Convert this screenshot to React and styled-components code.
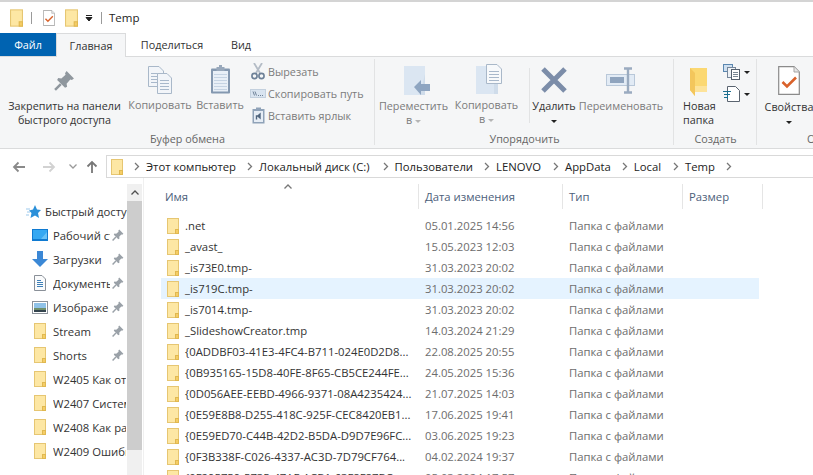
import React from "react";
import styled, { createGlobalStyle } from "styled-components";

const GlobalStyle = createGlobalStyle`
  html, body { margin: 0; padding: 0; background: #fff; }
  body { font-family: "Open Sans", "Noto Sans", sans-serif; font-size: 11.3px; color: #333; }
`;

const Page = styled.div`
  width: 813px;
  height: 475px;
  overflow: hidden;
  display: flex;
  flex-direction: column;
  background: #fff;
`;

const TopEdge = styled.div`
  height: 2px;
  background: #d4d4d4;
`;

const TitleBar = styled.div`
  height: 31px;
  display: flex;
  align-items: center;
  padding-left: 10px;
  font-size: 11.5px;
  color: #222;
`;

const TitleSep = styled.span`
  width: 1px;
  height: 12px;
  background: #9a9a9a;
  margin: ${(p) => p.$margin};
`;

const TitleGap = styled.span`
  width: 10px;
`;

const QuickCaret = styled.svg`
  margin-left: 7px;
`;

const Tabs = styled.div`
  height: 24px;
  box-sizing: border-box;
  display: flex;
  border-bottom: 1px solid #dadbdc;
  font-size: 10.8px;
`;

const Tab = styled.div`
  width: ${(p) => p.$w}px;
  height: ${(p) => (p.$active ? 24 : 23)}px;
  display: flex;
  align-items: center;
  justify-content: center;
  box-sizing: border-box;
  color: ${(p) => (p.$file ? "#fff" : "#333")};
  background: ${(p) => (p.$file ? "#0063b1" : p.$active ? "#f5f6f7" : "transparent")};
  border: ${(p) => (p.$active ? "1px solid #dadbdc" : "none")};
  border-bottom: none;
`;

const Ribbon = styled.div`
  height: 92px;
  box-sizing: border-box;
  background: #f5f6f7;
  border-bottom: 1px solid #dadbdc;
  display: flex;
  font-size: 10.8px;
`;

const Group = styled.div`
  width: ${(p) => p.$w}px;
  flex: none;
  display: flex;
  flex-direction: column;
  position: relative;
  box-sizing: border-box;
  padding-top: 2px;
  &::after {
    content: "";
    position: absolute;
    right: 0;
    top: 2px;
    bottom: 3px;
    width: 1px;
    background: #e2e3e4;
  }
`;

const GroupBody = styled.div`
  height: 73px;
  display: flex;
  padding-left: ${(p) => p.$pad || 0}px;
`;

const GroupLabel = styled.div`
  height: 14px;
  line-height: 14px;
  color: #666;
  white-space: nowrap;
  text-align: ${(p) => (p.$clipped ? "left" : "center")};
  padding-left: ${(p) => (p.$clipped ? 50 : 0)}px;
`;

const BigButton = styled.div`
  width: ${(p) => p.$w}px;
  margin-right: ${(p) => p.$gap || 0}px;
  flex: none;
  display: flex;
  flex-direction: column;
  align-items: center;
  text-align: center;
  line-height: 14px;
  white-space: nowrap;
  color: ${(p) => (p.$off ? "#7b7b7b" : "#333")};
  svg:first-child { margin-top: ${(p) => p.$iconTop ?? 6}px; }
`;

const BigLabel = styled.div`
  position: relative;
  margin-top: ${(p) => p.$top}px;
`;

const Caret = styled.span`
  display: inline-block;
  width: 0;
  height: 0;
  margin-left: ${(p) => p.$left ?? 3}px;
  vertical-align: middle;
  border-left: 3px solid transparent;
  border-right: 3px solid transparent;
  border-top: 3px solid ${(p) => (p.$off ? "#b5b5b5" : "#222")};
`;

const SmallList = styled.div`
  display: flex;
  flex-direction: column;
  margin-left: 1px;
  padding-top: 1px;
`;

const SmallRow = styled.div`
  height: 22px;
  display: flex;
  align-items: center;
  white-space: nowrap;
  color: #7b7b7b;
`;

const SmallIcon = styled.span`
  width: 20px;
  display: flex;
  justify-content: center;
`;

const VLine = styled.span`
  width: 1px;
  height: 55px;
  margin: 9px 2px 0 5px;
  background: #e2e3e4;
  flex: none;
`;

const NewFolderCol = styled.div`
  width: 41px;
  margin-left: 9px;
  line-height: 14px;
  color: #333;
  svg { display: block; margin: 9px 0 0 6px; }
`;

const NewFolderText = styled.div`
  margin-top: 3px;
`;

const IconStack = styled.div`
  display: flex;
  flex-direction: column;
  gap: 6px;
  padding-top: 5px;
  margin-left: -1px;
`;

const IconWithCaret = styled.div`
  display: flex;
  align-items: center;
  height: 16px;
`;

const AddressRow = styled.div`
  height: 29px;
  display: flex;
  align-items: center;
  flex: none;
  padding-top: 6px;
  box-sizing: border-box;
`;

const NavArea = styled.div`
  width: 106px;
  padding-left: 12px;
  box-sizing: border-box;
  display: flex;
  align-items: center;
`;

const NavGap = styled.span`
  width: ${(p) => p.$w}px;
`;

const AddressBox = styled.div`
  flex: 1;
  height: 23px;
  box-sizing: border-box;
  border: 1px solid #d9d9d9;
  border-right: none;
  display: flex;
  align-items: center;
  padding-left: 4px;
  color: #222;
  white-space: nowrap;
`;

const Crumb = styled.span`
  display: inline-flex;
  align-items: center;
  margin-left: ${(p) => p.$ml}px;
`;

const CrumbText = styled.span`
  margin-left: 6px;
`;

const Main = styled.div`
  flex: 1;
  display: flex;
  min-height: 0;
`;

const Sidebar = styled.div`
  width: 127px;
  flex: none;
  overflow: hidden;
  padding-top: 21px;
  box-sizing: border-box;
`;

const SideRow = styled.div`
  height: 24px;
  display: flex;
  align-items: center;
  padding-left: ${(p) => (p.$head ? 26 : 32)}px;
  position: relative;
  white-space: nowrap;
  color: #333;
`;

const SideIcon = styled.span`
  width: ${(p) => (p.$head ? 15 : 16)}px;
  margin-right: ${(p) => (p.$head ? 4 : 5)}px;
  flex: none;
  display: flex;
  justify-content: center;
`;

const SideText = styled.span`
  display: block;
  overflow: hidden;
  max-width: ${(p) => p.$max}px;
`;

const PinSlot = styled.span`
  position: absolute;
  left: 112px;
  top: 6px;
  display: flex;
`;

const Scrollbar = styled.div`
  width: 15px;
  flex: none;
  background: #f0f0f0;
  margin-top: 6px;
  display: flex;
  flex-direction: column;
`;

const ScrollButton = styled.div`
  height: 17px;
  display: flex;
  align-items: center;
  justify-content: center;
`;

const ScrollThumb = styled.div`
  height: 249px;
  background: #cdcdcd;
`;

const ListPane = styled.div`
  flex: 1;
  border-left: 1px solid #f0f0f0;
  margin-left: 1px;
  overflow: hidden;
  padding-left: 17px;
  position: relative;
`;

const SortMark = styled.span`
  position: absolute;
  left: 141px;
  top: 4px;
  display: flex;
`;

const HeaderRow = styled.div`
  display: grid;
  grid-template-columns: 258px 144px 120px 80px;
  height: 25px;
  margin-top: 6px;
  margin-bottom: 6px;
  color: #4c607a;
`;

const HeaderCell = styled.div`
  display: flex;
  align-items: center;
  box-sizing: border-box;
  padding-left: ${(p) => p.$pad}px;
  border-right: 1px solid #e5e5e5;
  height: 25px;
`;

const FileRow = styled.div`
  display: grid;
  grid-template-columns: 257px 144px 1fr;
  width: 598px;
  height: 21px;
  align-items: center;
  background: ${(p) => (p.$hover ? "#e5f3ff" : "transparent")};
  color: #6d6d6d;
  white-space: nowrap;
`;

const NameCell = styled.div`
  display: flex;
  align-items: center;
  padding-left: 6px;
  color: #333;
  overflow: hidden;
`;

const NameIcon = styled.span`
  width: 18px;
  flex: none;
  display: flex;
`;

const DateCell = styled.div`
  padding-left: 7px;
`;

const TypeCell = styled.div`
  padding-left: 7px;
`;

const MoveSvg = styled.svg`
  margin-left: 7px;
`;

const CopyToSvg = styled.svg`
  margin-left: 4px;
`;

const Folder = ({ w = 12, h = 16 }) => (
  <svg width={w} height={h} viewBox="0 0 12 16">
    <rect x="0.5" y="0.5" width="11" height="15" fill="#fde7a4" stroke="#e6c672" />
    <rect x="8.5" y="11.5" width="3" height="4" fill="#f5cd66" stroke="#e0b850" strokeWidth="1" />
  </svg>
);

const Pin = ({ size = 12, color = "#9aa1a8" }) => (
  <svg width={size} height={size} viewBox="0 0 20 20">
    <path d="M12 1 L19 8 L17 9.5 L15.5 9 L12 13 L12.5 16 L10.5 17 L3 9.5 L4 7.5 L7 8 L11 4.5 L10.5 3 Z" fill={color} />
    <path d="M6.5 13.5 L1 19" stroke={color} strokeWidth="2.4" />
  </svg>
);

const Doc = ({ x, y, w, h, lines = true, fill = "#f2f5f9", stroke = "#a9b8c9" }) => (
  <g>
    <path
      d={`M${x + 0.5} ${y + 0.5} H${x + w - 5} L${x + w - 0.5} ${y + 5} V${y + h - 0.5} H${x + 0.5} Z`}
      fill={fill}
      stroke={stroke}
    />
    {lines &&
      [...Array(Math.floor((h - 8) / 3))].map((_, i) => (
        <path key={i} d={`M${x + 3} ${y + 7.5 + i * 3} H${x + w - 3}`} stroke="#a8b8cb" />
      ))}
  </g>
);

const CopyIcon = () => (
  <svg width="26" height="28" viewBox="0 0 26 28">
    <Doc x={1} y={0} w={16} h={21} />
    <Doc x={10} y={7} w={15} h={21} />
  </svg>
);

const PasteIcon = () => (
  <svg width="21" height="29" viewBox="0 0 21 29">
    <rect x="1" y="3.5" width="19" height="25" rx="1" fill="#8498b0" />
    <rect x="3" y="6" width="15" height="20.5" fill="#e8eff7" />
    {[9, 12, 15, 18, 21, 24].map((y) => (
      <path key={y} d={`M4 ${y + 0.5} H17`} stroke="#c5d3e3" />
    ))}
    <rect x="6.5" y="2" width="8" height="4" fill="#98a8bb" />
    <rect x="9" y="0" width="3" height="3" fill="#98a8bb" />
  </svg>
);

const ScissorsIcon = () => (
  <svg width="14" height="17" viewBox="0 0 14 17" fill="none">
    <path d="M3 0 L9 10 M11 0 L5 10" stroke="#b4bcc6" strokeWidth="1.8" />
    <circle cx="3.5" cy="13" r="2.6" stroke="#6d8097" strokeWidth="1.6" />
    <circle cx="10.5" cy="13" r="2.6" stroke="#6d8097" strokeWidth="1.6" />
  </svg>
);

const CopyPathIcon = () => (
  <svg width="16" height="9" viewBox="0 0 16 9" fill="none">
    <rect x="0.5" y="0.5" width="15" height="8" fill="#d9e4f0" stroke="#c3d0de" />
    <path d="M3 2.5 L4.5 6.5 M5 2.5 L6.5 6.5" stroke="#6f8298" />
    <path d="M8 6.5 H9 M10 6.5 H11 M12 6.5 H13" stroke="#6f8298" />
  </svg>
);

const ShortcutIcon = () => (
  <svg width="13" height="17" viewBox="0 0 13 17" fill="none">
    <rect x="0.5" y="2" width="12" height="14.5" fill="#8fa2b8" />
    <rect x="2" y="4" width="9" height="11" fill="#e6edf5" />
    <rect x="4" y="0.5" width="5" height="3" fill="#8fa2b8" />
    <path d="M4.5 12.5 V9 H8 M8 7 V11 L5.8 9 Z" stroke="#50657e" strokeWidth="1.4" />
  </svg>
);

const MoveIcon = () => (
  <MoveSvg width="26" height="29" viewBox="0 0 26 29">
    <rect x="0" y="0" width="21" height="29" fill="#dbe6f2" />
    <path d="M21 8 V29 H16 Z" fill="#cfdcea" />
    <path d="M10 21 L17 14 V18 H26 V25 H17 V29 Z" fill="#8ea5c1" />
  </MoveSvg>
);

const CopyToIcon = () => (
  <CopyToSvg width="26" height="30" viewBox="0 0 26 30">
    <rect x="0" y="2" width="22" height="28" fill="#dbe6f2" />
    <rect x="18" y="8" width="4" height="22" fill="#cfdcea" />
    <Doc x={10} y={0} w={16} h={20} fill="#f7f9fb" />
  </CopyToSvg>
);

const DeleteIcon = () => (
  <svg width="26" height="26" viewBox="0 0 26 26">
    <path d="M2 2 L24 24 M24 2 L2 24" stroke="#7c8da9" strokeWidth="5" />
  </svg>
);

const RenameIcon = () => (
  <svg width="30" height="27" viewBox="0 0 30 27" fill="none">
    <rect x="0.5" y="7.5" width="28" height="11" fill="#e2ebf5" stroke="#b9c8d9" />
    <rect x="4" y="10" width="14" height="6" fill="#8fa4be" />
    <path d="M18 1.5 H26 M22 1.5 V25.5 M18 25.5 H26" stroke="#9aabc0" strokeWidth="2.4" />
  </svg>
);

const BigFolderIcon = () => (
  <svg width="18" height="28" viewBox="0 0 18 28">
    <path d="M1 0 H18 V24 H6 V28 L1 22 Z" fill="#fbd872" />
    <path d="M1 0 L6 5 V28 L1 22 Z" fill="#f3c65c" />
    <path d="M6 18 H18 V24 H6 Z" fill="#fde39a" />
  </svg>
);

const NewItemIcon = () => (
  <svg width="18" height="16" viewBox="0 0 18 16" fill="none">
    <rect x="0.5" y="0.5" width="9" height="7" fill="#cfe0f0" stroke="#5b87b0" />
    <rect x="4.5" y="3.5" width="8" height="10" fill="#eef2f6" stroke="#77879a" />
    <rect x="8.5" y="5.5" width="8" height="10" fill="#fff" stroke="#55606e" />
    <path d="M10 8.5 H15 M10 10.5 H15 M10 12.5 H15" stroke="#7a8794" />
  </svg>
);

const EasyAccessIcon = () => (
  <svg width="18" height="16" viewBox="0 0 18 16" fill="none">
    <path d="M4.5 0.5 H12.5 L16.5 4.5 V15.5 H4.5 Z" fill="#fff" stroke="#5a6470" />
    <path d="M0 5.5 H8 M1 8.5 H7 M1 11.5 H5" stroke="#1d6f8f" />
    <path d="M4.5 5 V13" stroke="#1d6f8f" />
  </svg>
);

const PropsIcon = ({ w = 22, h = 29 }) => (
  <svg width={w} height={h} viewBox="0 0 22 29" fill="none">
    <path d="M0.7 0.7 H16 L21.3 6 V28.3 H0.7 Z" fill="#fff" stroke="#8b8b8b" strokeWidth="1.2" />
    <path d="M16 0.7 V6 H21.3" fill="#e6e6e6" stroke="#a5a5a5" />
    <path d="M4.5 16 L9 20.5 L18 11.5" stroke="#d9622b" strokeWidth="2.6" />
  </svg>
);

const ArrowSvg = styled.svg`
  transform: rotate(${(p) => p.$dir}deg);
`;

const Arrow = ({ dir, color }) => (
  <ArrowSvg $dir={dir} width="14" height="14" viewBox="0 0 14 14" fill="none">
    <path d="M13 7 H2 M6.5 2.5 L2 7 L6.5 11.5" stroke={color} strokeWidth="1.8" />
  </ArrowSvg>
);

const Chevron = ({ color = "#777", rot = 0, size = 6 }) => (
  <ArrowSvg $dir={rot} width={size} height={size + 3} viewBox="0 0 6 9" fill="none">
    <path d="M1 1 L4.5 4.5 L1 8" stroke={color} strokeWidth="1.3" />
  </ArrowSvg>
);

const StarIcon = () => (
  <svg width="15" height="15" viewBox="0 0 15 15">
    <path d="M9 1 L11 5.5 L15 6 L12 9 L13 14 L9 11.5 L4.5 14 L5.5 9 L3 6.5 L7 5.5 Z" fill="#2b90d9" />
    <path d="M0 5 H4 M1 8 H4 M0 11 H3" stroke="#9cc9ec" />
  </svg>
);

const DesktopIcon = () => (
  <svg width="16" height="12" viewBox="0 0 16 12">
    <rect x="0" y="0" width="16" height="12" fill="#0f7ad1" />
    <rect x="1" y="1" width="14" height="9" fill="#35a8f2" />
    <path d="M9 10 L15 3 V10 Z" fill="#69c2f7" />
  </svg>
);

const DownloadIcon = () => (
  <svg width="16" height="16" viewBox="0 0 16 16">
    <path d="M5 0 H11 V8 H16 L8 16 L0 8 H5 Z" fill="#3b88d6" />
  </svg>
);

const DocumentIcon = () => (
  <svg width="12" height="16" viewBox="0 0 12 16" fill="none">
    <path d="M0.5 0.5 H8 L11.5 4 V15.5 H0.5 Z" fill="#fafbfc" stroke="#8a9098" />
    <path d="M3 5.5 H7 M3 7.5 H9 M3 9.5 H9 M3 11.5 H9" stroke="#3f80b8" />
  </svg>
);

const PictureIcon = () => (
  <svg width="16" height="13" viewBox="0 0 16 13">
    <rect x="0.5" y="0.5" width="15" height="12" fill="#fff" stroke="#8b929a" />
    <rect x="2" y="2" width="12" height="5" fill="#8fc2e8" />
    <rect x="2" y="7" width="12" height="2" fill="#6f8f6a" />
    <rect x="2" y="9" width="12" height="2" fill="#34454f" />
  </svg>
);

const sideItems = [
  { icon: <DesktopIcon />, text: "Рабочий стол", max: 57, pin: true },
  { icon: <DownloadIcon />, text: "Загрузки", max: 60, pin: true },
  { icon: <DocumentIcon />, text: "Документы", max: 57, pin: true },
  { icon: <PictureIcon />, text: "Изображения", max: 56, pin: true },
  { icon: <Folder />, text: "Stream", max: 60, pin: true },
  { icon: <Folder />, text: "Shorts", max: 60, pin: true },
  { icon: <Folder />, text: "W2405 Как отключить", max: 73 },
  { icon: <Folder />, text: "W2407 Система", max: 73 },
  { icon: <Folder />, text: "W2408 Как работает", max: 73 },
  { icon: <Folder />, text: "W2409 Ошибка", max: 73 },
];

const files = [
  [".net", "05.01.2025 14:56"],
  ["_avast_", "15.05.2023 12:03"],
  ["_is73E0.tmp-", "31.03.2023 20:02"],
  ["_is719C.tmp-", "31.03.2023 20:02", true],
  ["_is7014.tmp-", "31.03.2023 20:02"],
  ["_SlideshowCreator.tmp", "14.03.2024 21:29"],
  ["{0ADDBF03-41E3-4FC4-B711-024E0D2D8...", "22.08.2025 20:55"],
  ["{0B935165-15D8-40FE-8F65-CB5CE244FE...", "24.05.2025 15:36"],
  ["{0D056AEE-EEBD-4966-9371-08A4235424...", "21.07.2025 14:03"],
  ["{0E59E8B8-D255-418C-925F-CEC8420EB1...", "17.06.2025 19:41"],
  ["{0E59ED70-C44B-42D2-B5DA-D9D7E96FC...", "03.06.2025 19:23"],
  ["{0F3B338F-C026-4337-AC3D-7D79CF764...", "04.02.2024 19:37"],
  ["{0F295759-5735-47AF-ACB1-63F8F87BC...", "05.03.2024 17:57"],
];

const crumbs = [
  ["Этот компьютер", 11],
  ["Локальный диск (C:)", 11],
  ["Пользователи", 13],
  ["LENOVO", 11],
  ["AppData", 12],
  ["Local", 11],
  ["Temp", 12],
];

export default function App() {
  return (
    <Page>
      <GlobalStyle />
      <TopEdge />
      <TitleBar>
        <Folder w={13} h={18} />
        <TitleSep $margin="0 11px 0 8px" />
        <PropsIcon w={12} h={16} />
        <TitleGap />
        <Folder w={13} h={18} />
        <QuickCaret width="8" height="8" viewBox="0 0 8 8">
          <path d="M1 1.5 H7 M1 3.5 H7 L4 7 Z" stroke="#222" fill="#222" />
        </QuickCaret>
        <TitleSep $margin="0 7px 0 8px" />
        Temp
      </TitleBar>
      <Tabs>
        <Tab $w={56} $file>Файл</Tab>
        <Tab $w={70} $active>Главная</Tab>
        <Tab $w={92}>Поделиться</Tab>
        <Tab $w={46}>Вид</Tab>
      </Tabs>
      <Ribbon>
        <Group $w={375}>
          <GroupBody $pad={4}>
            <BigButton $w={121} $gap={2} $iconTop={11}>
              <Pin size={21} color="#8f979e" />
              <BigLabel $top={8}>Закрепить на панели<br />быстрого доступа</BigLabel>
            </BigButton>
            <BigButton $w={66} $off $iconTop={7}>
              <CopyIcon />
              <BigLabel $top={4}>Копировать</BigLabel>
            </BigButton>
            <BigButton $w={54} $off $iconTop={6}>
              <PasteIcon />
              <BigLabel $top={4}>Вставить</BigLabel>
            </BigButton>
            <SmallList>
              <SmallRow><SmallIcon><ScissorsIcon /></SmallIcon>Вырезать</SmallRow>
              <SmallRow><SmallIcon><CopyPathIcon /></SmallIcon>Скопировать путь</SmallRow>
              <SmallRow><SmallIcon><ShortcutIcon /></SmallIcon>Вставить ярлык</SmallRow>
            </SmallList>
          </GroupBody>
          <GroupLabel>Буфер обмена</GroupLabel>
        </Group>
        <Group $w={299}>
          <GroupBody $pad={3}>
            <BigButton $w={71} $off $iconTop={7}>
              <MoveIcon />
              <BigLabel $top={4}>Переместить<br />в<Caret $off /></BigLabel>
            </BigButton>
            <BigButton $w={75} $off $iconTop={5}>
              <CopyToIcon />
              <BigLabel $top={4}>Копировать<br />в<Caret $off /></BigLabel>
            </BigButton>
            <VLine />
            <BigButton $w={44} $iconTop={8}>
              <DeleteIcon />
              <BigLabel $top={6}>Удалить<br /><Caret $left={0} /></BigLabel>
            </BigButton>
            <BigButton $w={90} $off $iconTop={8}>
              <RenameIcon />
              <BigLabel $top={5}>Переименовать</BigLabel>
            </BigButton>
          </GroupBody>
          <GroupLabel>Упорядочить</GroupLabel>
        </Group>
        <Group $w={83}>
          <GroupBody>
            <NewFolderCol>
              <BigFolderIcon />
              <NewFolderText>Новая<br />папка</NewFolderText>
            </NewFolderCol>
            <IconStack>
              <IconWithCaret><NewItemIcon /><Caret /></IconWithCaret>
              <IconWithCaret><EasyAccessIcon /><Caret /></IconWithCaret>
            </IconStack>
          </GroupBody>
          <GroupLabel>Создать</GroupLabel>
        </Group>
        <Group $w={120}>
          <GroupBody $pad={7}>
            <BigButton $w={50} $iconTop={7}>
              <PropsIcon />
              <BigLabel $top={5}>Свойства<br /><Caret $left={0} /></BigLabel>
            </BigButton>
          </GroupBody>
          <GroupLabel $clipped>Открыть</GroupLabel>
        </Group>
      </Ribbon>
      <AddressRow>
        <NavArea>
          <Arrow dir={0} color="#8a8a8a" />
          <NavGap $w={16} />
          <Arrow dir={180} color="#d2d2d2" />
          <NavGap $w={14} />
          <Chevron rot={90} color="#9a9a9a" />
          <NavGap $w={9} />
          <Arrow dir={90} color="#777" />
        </NavArea>
        <AddressBox>
          <Folder w={12} h={16} />
          {crumbs.map(([text, ml]) => (
            <Crumb key={text} $ml={ml}>
              <Chevron />
              <CrumbText>{text}</CrumbText>
            </Crumb>
          ))}
          <Crumb $ml={11}><Chevron /></Crumb>
        </AddressBox>
      </AddressRow>
      <Main>
        <Sidebar>
          <SideRow $head>
            <SideIcon $head><StarIcon /></SideIcon>
            <SideText $max={82}>Быстрый доступ</SideText>
          </SideRow>
          {sideItems.map((item) => (
            <SideRow key={item.text}>
              <SideIcon>{item.icon}</SideIcon>
              <SideText $max={item.max}>{item.text}</SideText>
              {item.pin && <PinSlot><Pin /></PinSlot>}
            </SideRow>
          ))}
        </Sidebar>
        <Scrollbar>
          <ScrollButton>
            <Chevron rot={-90} color="#505050" size={6} />
          </ScrollButton>
          <ScrollThumb />
        </Scrollbar>
        <ListPane>
          <SortMark><Chevron rot={-90} color="#777" size={6} /></SortMark>
          <HeaderRow>
            <HeaderCell $pad={4}>Имя</HeaderCell>
            <HeaderCell $pad={6}>Дата изменения</HeaderCell>
            <HeaderCell $pad={6}>Тип</HeaderCell>
            <HeaderCell $pad={6}>Размер</HeaderCell>
          </HeaderRow>
          {files.map(([name, date, hover]) => (
            <FileRow key={name} $hover={hover}>
              <NameCell>
                <NameIcon><Folder /></NameIcon>
                {name}
              </NameCell>
              <DateCell>{date}</DateCell>
              <TypeCell>Папка с файлами</TypeCell>
            </FileRow>
          ))}
        </ListPane>
      </Main>
    </Page>
  );
}
